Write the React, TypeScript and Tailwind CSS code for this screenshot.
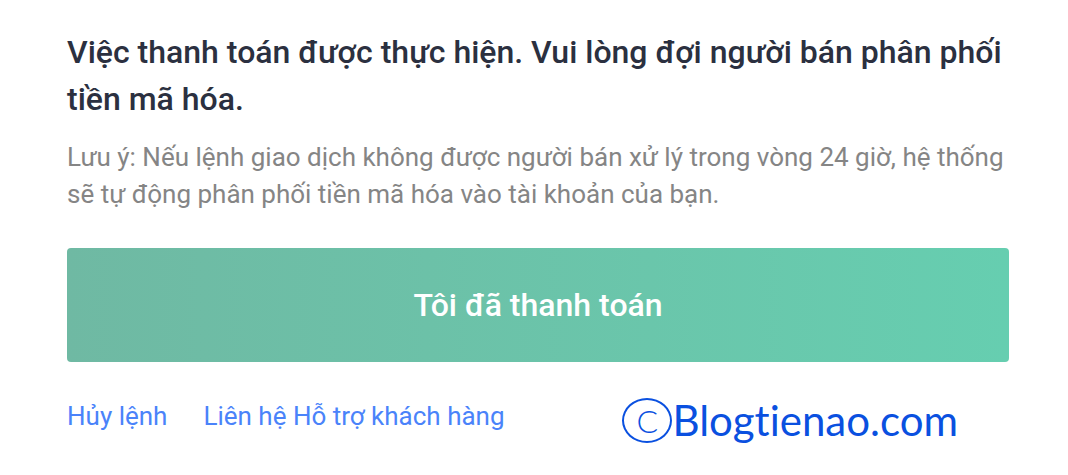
const links = ["Hủy lệnh", "Liên hệ Hỗ trợ khách hàng"];

export default function App() {
  return (
    <main className="bg-white pt-[29px] pr-[59px] pb-6 pl-[67px] font-['Roboto','Noto_Sans',sans-serif]">
      <h1 className="text-[32px] leading-[47px] font-medium text-[#2b3040]">
        Việc thanh toán được thực hiện. Vui lòng đợi người bán phân phối tiền mã hóa.
      </h1>
      <p className="mt-4 text-[26px] leading-[37px] text-[#858585]">
        Lưu ý: Nếu lệnh giao dịch không được người bán xử lý trong vòng 24 giờ, hệ thống sẽ tự động phân phối tiền
        mã hóa vào tài khoản của bạn.
      </p>
      <button
        type="button"
        className="mt-[35px] h-[114px] w-full rounded bg-linear-to-r from-[#6fb9a3] to-[#66ceb0] text-[32px] font-medium text-white"
      >
        Tôi đã thanh toán
      </button>
      <div className="mt-9 flex items-start justify-between">
        <nav className="flex gap-9 text-[26px] leading-[37px] text-[#4a83fa]">
          {links.map((label) => (
            <a key={label} href="#">
              {label}
            </a>
          ))}
        </nav>

        {/* Site credit */}
        <div className="mr-[51px] flex items-center font-['Lato','Open_Sans',sans-serif] text-[#0a50e0] [font-variant-ligatures:none]">
          <span className="flex h-[45px] w-[50px] items-center justify-center rounded-[50%] border-2 border-[#0a50e0] text-[32px] leading-none font-light">
            C
          </span>
          <span className="text-[42px] leading-[45px]">Blogtienao.com</span>
        </div>
      </div>
    </main>
  );
}
